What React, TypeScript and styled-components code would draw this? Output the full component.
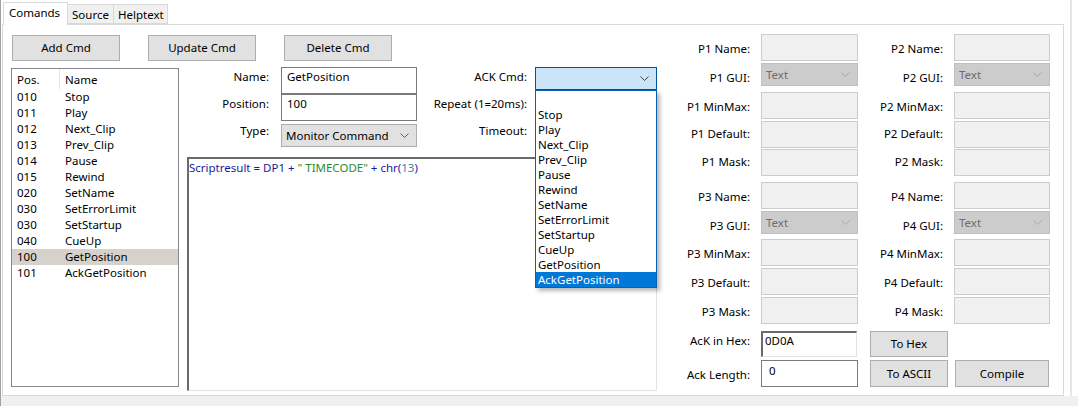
import React from "react";
import styled, { createGlobalStyle } from "styled-components";

const GlobalStyle = createGlobalStyle`
  html, body {
    margin: 0;
    padding: 0;
    background: #ffffff;
  }
  body {
    font-family: "Noto Sans", "Open Sans", sans-serif;
    font-size: 11.5px;
    line-height: 16px;
    color: #000000;
  }
  * {
    box-sizing: border-box;
  }
`;

const Window = styled.div`
  width: 1078px;
  height: 406px;
  display: flex;
  flex-direction: column;
  background: #ffffff;
  border-left: 1px solid #a0a0a0;
  overflow: hidden;
`;

const Top = styled.div`
  display: flex;
  height: 396px;
  padding-left: 1px;
`;

const Main = styled.div`
  width: 1062px;
  display: flex;
  flex-direction: column;
`;

const Gutter = styled.div`
  flex: 1;
  padding-left: 6px;
  div {
    width: 2px;
    height: 100%;
    background: #e6e6e6;
  }
`;

const BottomStrip = styled.div`
  height: 10px;
  background: #f0f0f0;
`;

const TabStrip = styled.div`
  height: 24px;
  display: flex;
  align-items: flex-end;
  padding-left: 1px;
  position: relative;
  z-index: 2;
`;

const Tab = styled.div<{ $active?: boolean; $w: number }>`
  width: ${(p) => p.$w}px;
  height: ${(p) => (p.$active ? 23 : 20)}px;
  margin-bottom: ${(p) => (p.$active ? -1 : 0)}px;
  border: 1px solid #d9d9d9;
  border-bottom: ${(p) => (p.$active ? "none" : "1px solid #d9d9d9")};
  border-left: ${(p) => (p.$active ? "1px solid #d9d9d9" : "none")};
  background: ${(p) => (p.$active ? "#ffffff" : "#f0f0f0")};
  padding: ${(p) => (p.$active ? "2px 0 0 5px" : "2px 0 0 4px")};
  white-space: nowrap;
`;

const Panel = styled.div`
  height: 372px;
  border: 1px solid #d9d9d9;
  padding: 10px 0 0 8px;
  display: flex;
  align-items: flex-start;
`;

const LeftSection = styled.div`
  width: 646px;
  display: flex;
  flex-direction: column;
`;

const ButtonRow = styled.div`
  display: flex;
  gap: 28px;
  padding-left: 1px;
  margin-bottom: 7px;
`;

const Button = styled.div<{ $w: number; $h?: number; $ml?: number }>`
  width: ${(p) => p.$w}px;
  height: ${(p) => p.$h ?? 26}px;
  margin-left: ${(p) => p.$ml ?? 0}px;
  background: #e1e1e1;
  border: 1px solid #adadad;
  display: flex;
  align-items: center;
  justify-content: center;
  white-space: nowrap;
`;

const Body = styled.div`
  display: flex;
  gap: 7px;
  align-items: flex-start;
`;

const ListBox = styled.div`
  width: 168px;
  height: 319px;
  border: 1px solid #828790;
  background: #ffffff;
`;

const ListRow = styled.div<{ $header?: boolean; $selected?: boolean }>`
  display: flex;
  height: ${(p) => (p.$header ? 20 : 16)}px;
  padding-top: ${(p) => (p.$header ? 3 : 0)}px;
  background: ${(p) => (p.$selected ? "#d6d2cb" : "transparent")};
  white-space: nowrap;
`;

const PosCell = styled.div<{ $header?: boolean }>`
  width: 48px;
  padding-left: 5px;
  border-right: ${(p) => (p.$header ? "1px solid #e5e5e5" : "none")};
  margin-top: ${(p) => (p.$header ? -3 : 0)}px;
  padding-top: ${(p) => (p.$header ? 3 : 0)}px;
`;

const NameCell = styled.div`
  padding-left: 5px;
`;

const MiddleCol = styled.div`
  width: 471px;
  margin-top: -1px;
  display: flex;
  flex-direction: column;
`;

const FormGrid = styled.div`
  display: grid;
  grid-template-columns: 95px 136px 118px 122px;
  grid-template-rows: 27px 27px 26px;
`;

const FormLabel = styled.div<{ $pr: number }>`
  text-align: right;
  padding: 2px ${(p) => p.$pr}px 0 0;
  white-space: nowrap;
`;

const TextBox = styled.div<{ $w?: number; $h?: number; $sunken?: boolean; $pt?: number; $pl?: number }>`
  width: ${(p) => (p.$w ? `${p.$w}px` : "100%")};
  height: ${(p) => p.$h ?? 27}px;
  background: #ffffff;
  border: 1px solid #7a7a7a;
  ${(p) =>
    p.$sunken &&
    `
    border-top: 2px solid #6a6a6a;
    border-left: 2px solid #6a6a6a;
    border-right: 1px solid #e3e3e3;
    border-bottom: 1px solid #e3e3e3;
  `}
  padding: ${(p) => p.$pt ?? 1}px 0 0 ${(p) => p.$pl ?? 5}px;
  white-space: nowrap;
`;

const DisabledBox = styled.div<{ $w: number }>`
  width: ${(p) => p.$w}px;
  height: 27px;
  background: #f0f0f0;
  border: 1px solid #cccccc;
`;

const Combo = styled.div<{ $variant: "normal" | "focused" | "disabled"; $mt?: number }>`
  position: relative;
  width: 100%;
  height: 23px;
  margin-top: ${(p) => p.$mt ?? 0}px;
  display: flex;
  align-items: center;
  justify-content: space-between;
  padding: 0 7px 0 4px;
  white-space: nowrap;
  background: ${(p) =>
    p.$variant === "focused" ? "#cce4f7" : p.$variant === "disabled" ? "#cccccc" : "#e1e1e1"};
  border: 1px solid
    ${(p) => (p.$variant === "focused" ? "#005499" : p.$variant === "disabled" ? "#bfbfbf" : "#adadad")};
  color: ${(p) => (p.$variant === "disabled" ? "#6d6d6d" : "#000000")};
`;

const Chevron = ({ color = "#606060" }: { color?: string }) => (
  <svg width="9" height="5" viewBox="0 0 9 5">
    <polyline points="0.5,0.5 4.5,4.5 8.5,0.5" fill="none" stroke={color} strokeWidth="1" />
  </svg>
);

const DropList = styled.div`
  position: absolute;
  top: 22px;
  left: -1px;
  width: 122px;
  height: 198px;
  background: #ffffff;
  border: 1px solid #0a5fb4;
  padding-top: 1px;
  box-shadow: 3px 3px 4px rgba(0, 0, 0, 0.28);
  z-index: 5;
  color: #000000;
`;

const DropItem = styled.div<{ $selected?: boolean }>`
  height: 15px;
  line-height: 15px;
  padding-left: 2px;
  background: ${(p) => (p.$selected ? "#0078d7" : "transparent")};
  color: ${(p) => (p.$selected ? "#ffffff" : "#000000")};
`;

const Editor = styled.div`
  width: 470px;
  height: 234px;
  margin: 10px 0 0 1px;
  background: #ffffff;
  border-top: 2px solid #6a6a6a;
  border-left: 2px solid #6a6a6a;
  border-right: 1px solid #e3e3e3;
  border-bottom: 1px solid #e3e3e3;
  padding-top: 1px;
  white-space: pre;
  color: #1a1aa0;
`;

const Str = styled.span`
  color: #2e8b2e;
`;

const Num = styled.span`
  color: #3a7fa8;
`;

const RightSection = styled.div`
  margin: -1px 0 0 23px;
  display: flex;
  flex-direction: column;
`;

const ParamRow = styled.div<{ $h: number; $mt: number }>`
  display: grid;
  grid-template-columns: 81px 97px 96px 96px;
  height: ${(p) => p.$h}px;
  margin-top: ${(p) => p.$mt}px;
`;

const ParamLabel = styled.div<{ $pt: number }>`
  text-align: right;
  padding: ${(p) => p.$pt}px 11px 0 0;
  white-space: nowrap;
`;

const CMDS: [string, string][] = [
  ["010", "Stop"],
  ["011", "Play"],
  ["012", "Next_Clip"],
  ["013", "Prev_Clip"],
  ["014", "Pause"],
  ["015", "Rewind"],
  ["020", "SetName"],
  ["030", "SetErrorLimit"],
  ["030", "SetStartup"],
  ["040", "CueUp"],
  ["100", "GetPosition"],
  ["101", "AckGetPosition"],
];

type ParamDef = { kind: "text" | "gui"; a: string; b: string; mt: number; pt: number };

const PARAMS: ParamDef[] = [
  { kind: "text", a: "P1 Name:", b: "P2 Name:", mt: 0, pt: 7 },
  { kind: "gui", a: "P1 GUI:", b: "P2 GUI:", mt: 2, pt: 7 },
  { kind: "text", a: "P1 MinMax:", b: "P2 MinMax:", mt: 6, pt: 7 },
  { kind: "text", a: "P1 Default:", b: "P2 Default:", mt: 2, pt: 5 },
  { kind: "text", a: "P1 Mask:", b: "P2 Mask:", mt: 1, pt: 5 },
  { kind: "text", a: "P3 Name:", b: "P4 Name:", mt: 6, pt: 7 },
  { kind: "gui", a: "P3 GUI:", b: "P4 GUI:", mt: 2, pt: 7 },
  { kind: "text", a: "P3 MinMax:", b: "P4 MinMax:", mt: 5, pt: 7 },
  { kind: "text", a: "P3 Default:", b: "P4 Default:", mt: 2, pt: 7 },
  { kind: "text", a: "P3 Mask:", b: "P4 Mask:", mt: 2, pt: 7 },
];

const GuiCombo = () => (
  <Combo $variant="disabled">
    <span>Text</span>
    <Chevron color="#a8a8a8" />
  </Combo>
);

export default function App() {
  return (
    <>
      <GlobalStyle />
      <Window>
        <Top>
          <Main>
            <TabStrip>
              <Tab $active $w={65}>Comands</Tab>
              <Tab $w={46}>Source</Tab>
              <Tab $w={54}>Helptext</Tab>
            </TabStrip>
            <Panel>
              <LeftSection>
                <ButtonRow>
                  <Button $w={108}>Add Cmd</Button>
                  <Button $w={108}>Update Cmd</Button>
                  <Button $w={108}>Delete Cmd</Button>
                </ButtonRow>
                <Body>
                  <ListBox>
                    <ListRow $header>
                      <PosCell $header>Pos.</PosCell>
                      <NameCell>Name</NameCell>
                    </ListRow>
                    {CMDS.map(([pos, name], i) => (
                      <ListRow key={i} $selected={name === "GetPosition"}>
                        <PosCell>{pos}</PosCell>
                        <NameCell>{name}</NameCell>
                      </ListRow>
                    ))}
                  </ListBox>
                  <MiddleCol>
                    <FormGrid>
                      <FormLabel $pr={12}>Name:</FormLabel>
                      <TextBox>GetPosition</TextBox>
                      <FormLabel $pr={8}>ACK Cmd:</FormLabel>
                      <Combo $variant="focused">
                        <span />
                        <Chevron color="#404040" />
                        <DropList>
                          <DropItem>&nbsp;</DropItem>
                          {CMDS.map(([, name], i) => (
                            <DropItem key={i} $selected={name === "AckGetPosition"}>
                              {name}
                            </DropItem>
                          ))}
                        </DropList>
                      </Combo>
                      <FormLabel $pr={12}>Position:</FormLabel>
                      <TextBox>100</TextBox>
                      <FormLabel $pr={8}>Repeat (1=20ms):</FormLabel>
                      <TextBox />
                      <FormLabel $pr={12}>Type:</FormLabel>
                      <Combo $variant="normal" $mt={3}>
                        <span>Monitor Command</span>
                        <Chevron />
                      </Combo>
                      <FormLabel $pr={8}>Timeout:</FormLabel>
                      <TextBox $h={23} />
                    </FormGrid>
                    <Editor>
                      Scriptresult = DP1 + <Str>" TIMECODE"</Str> + chr(<Num>13</Num>)
                    </Editor>
                  </MiddleCol>
                </Body>
              </LeftSection>
              <RightSection>
                {PARAMS.map((p, i) => (
                  <ParamRow key={i} $h={p.kind === "gui" ? 23 : 27} $mt={p.mt}>
                    <ParamLabel $pt={p.pt}>{p.a}</ParamLabel>
                    {p.kind === "gui" ? <GuiCombo /> : <DisabledBox $w={97} />}
                    <ParamLabel $pt={p.pt}>{p.b}</ParamLabel>
                    {p.kind === "gui" ? <GuiCombo /> : <DisabledBox $w={96} />}
                  </ParamRow>
                ))}
                <ParamRow $h={26} $mt={7}>
                  <ParamLabel $pt={2}>AcK in Hex:</ParamLabel>
                  <TextBox $w={96} $h={26} $sunken $pt={0} $pl={2}>
                    0D0A
                  </TextBox>
                  <Button $w={78} $ml={12}>To Hex</Button>
                </ParamRow>
                <ParamRow $h={27} $mt={3}>
                  <ParamLabel $pt={7}>Ack Length:</ParamLabel>
                  <TextBox $w={97} $pt={2} $pl={7}>
                    0
                  </TextBox>
                  <Button $w={78} $h={27} $ml={12}>To ASCII</Button>
                  <Button $w={94} $h={27} $ml={1}>Compile</Button>
                </ParamRow>
              </RightSection>
            </Panel>
          </Main>
          <Gutter>
            <div />
          </Gutter>
        </Top>
        <BottomStrip />
      </Window>
    </>
  );
}
